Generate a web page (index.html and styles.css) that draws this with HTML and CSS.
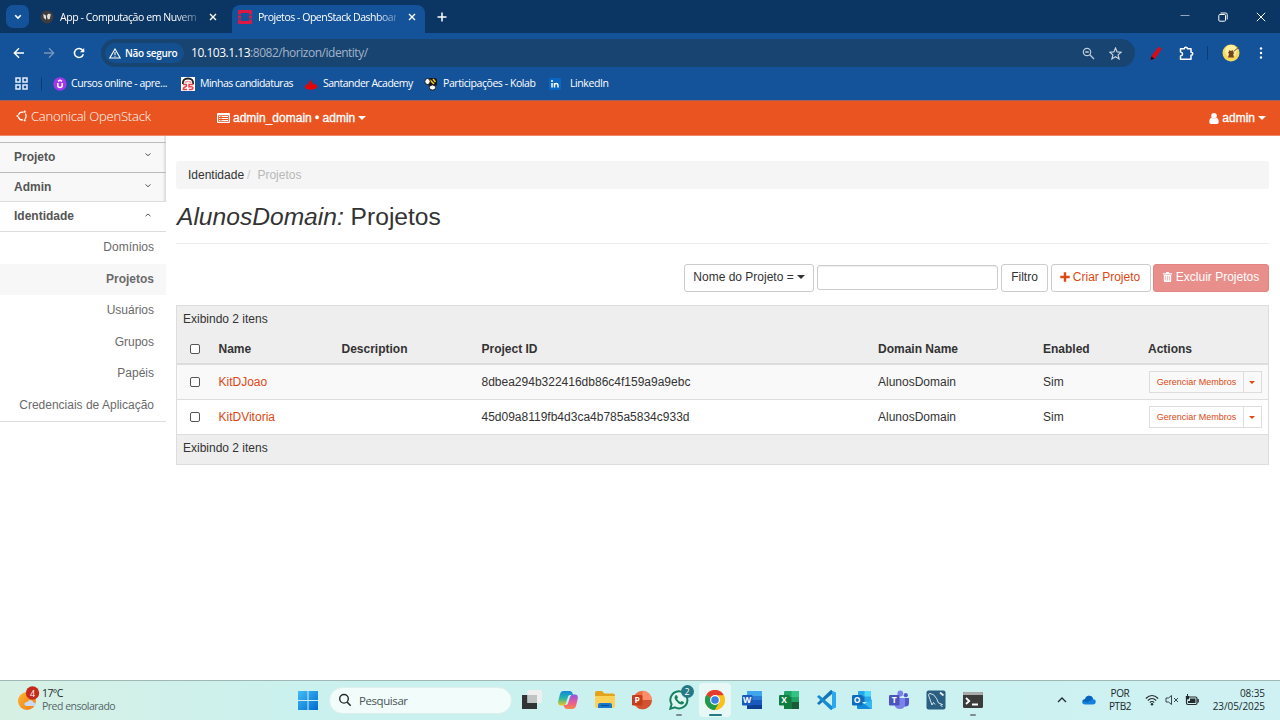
FILE: index.html
```html
<!DOCTYPE html>
<html lang="pt-BR">
<head>
<meta charset="utf-8">
<title>Projetos - OpenStack Dashboard</title>
<link rel="stylesheet" href="styles.css">
</head>
<body>
<div class="screen">
<header class="browser">
  <div class="tabstrip">
    <div class="tabsearch"><svg width="8" height="6" viewBox="0 0 8 6"><path d="M1.2 1.2 4 4l2.8-2.8" fill="none" stroke="#fff" stroke-width="1.6"/></svg></div>
    <div class="tab">
      <svg class="fav" width="14" height="14" viewBox="0 0 14 14"><circle cx="7" cy="7" r="6.5" fill="#3d3d3f"/><path d="M3.2 4 6 5.500v4.200L3.800 8zM10.800 4 8 3.700 6.800 6l1 3.500L9.800 9z" fill="#ddd"/></svg>
      <span class="tabtitle t1">App - Computação em Nuvem</span>
      <svg class="x" width="8" height="8" viewBox="0 0 8 8"><path d="m1 1 6 6M7 1 1 7" stroke="#fff" stroke-width="1.4"/></svg>
    </div>
    <div class="tab active">
      <svg class="fav" width="14" height="14" viewBox="0 0 14 14"><path fill="#da1a42" d="M1 0h12q1 0 1 1v3.500h-3V3H3v1.500H0V1q0-1 1-1zM0 5.500h3v3H0zM11 5.500h3v3h-3zM0 9.500h3V11h8V9.500h3V13q0 1-1 1H1q-1 0-1-1z"/></svg>
      <span class="tabtitle t2">Projetos - OpenStack Dashboar</span>
      <svg class="x" width="8" height="8" viewBox="0 0 8 8"><path d="m1 1 6 6M7 1 1 7" stroke="#fff" stroke-width="1.4"/></svg>
    </div>
    <svg class="newtab" width="10" height="10" viewBox="0 0 10 10"><path d="M5 .5v9M.5 5h9" stroke="#fff" stroke-width="1.5"/></svg>
    <div class="wincontrols">
      <svg width="10" height="10" viewBox="0 0 10 10"><path d="M.5 3.500h9" stroke="#8ea6c1"/></svg>
      <svg width="10" height="10" viewBox="0 0 10 10"><rect x=".8" y="2.500" width="6.700" height="6.700" rx="1" fill="none" stroke="#fff"/><path d="M2.500 1h5.200q1.500 0 1.500 1.500v5" fill="none" stroke="#fff"/></svg>
      <svg width="10" height="10" viewBox="0 0 10 10"><path d="m.8.8 8.400 8.400M9.200.8.800 9.200" stroke="#fff"/></svg>
    </div>
  </div>
  <div class="toolbar">
    <svg width="12" height="12" viewBox="0 0 12 12"><path d="M11 6H1.500M6 1.200 1.300 6 6 10.800" fill="none" stroke="#fff" stroke-width="1.400"/></svg>
    <svg width="12" height="12" viewBox="0 0 12 12"><path d="M1 6h9.500M6 1.200 10.700 6 6 10.800" fill="none" stroke="#7595bf" stroke-width="1.300"/></svg>
    <svg width="12" height="12" viewBox="0 0 12 12"><path d="M10.300 7.200A4.500 4.500 0 1 1 9.600 3.300L11 4.600" fill="none" stroke="#fff" stroke-width="1.500"/><path d="M11.200.9v4.300H6.900z" fill="#fff"/></svg>
    <div class="omnibox">
      <div class="insecure"><svg width="12" height="11" viewBox="0 0 12 11"><path d="M6 1 11.200 10H.8z" fill="none" stroke="#fff" stroke-width="1.100"/><path d="M6 4v3M6 7.800v1" stroke="#fff" stroke-width="1.100"/></svg><span>Não seguro</span></div>
      <span class="url">10.103.1.13<span>:8082/horizon/identity/</span></span>
      <svg class="lens" width="13" height="13" viewBox="0 0 13 13"><circle cx="5" cy="5" r="3.700" fill="none" stroke="#bfcbd9" stroke-width="1.200"/><path d="m7.800 7.800 4.200 4.200M3.200 5h3.600" stroke="#bfcbd9" stroke-width="1.300"/></svg>
      <svg class="star" width="13" height="13" viewBox="0 0 24 24"><path d="m12 2 3 7 7.600.6-5.800 5 1.800 7.400L12 18l-6.600 4 1.800-7.400-5.800-5L9 9z" fill="none" stroke="#c9d4e0" stroke-width="2.200"/></svg>
    </div>
    <svg class="pen" width="12" height="15" viewBox="0 0 12 15"><path d="M8.500 1 11.800 2.500 5 12.800.5 14l1-4z" fill="#e30613"/><path d="m1.300 10.500 3.400 2L.5 14z" fill="#111"/></svg>
    <svg class="puzzle" width="15" height="15" viewBox="0 0 15 15"><path d="M1.500 2.700h3.900q0-1.500 1.500-1.500t1.500 1.500H12v3.500q1.800 0 1.800 1.500T12 9.200v4.100H1.500V10q2.100-.3 2.100-2T1.500 6z" fill="none" stroke="#fff" stroke-width="1.500" stroke-linejoin="round"/></svg>
    <i class="vsep"></i>
    <svg class="avatar" width="18" height="18" viewBox="0 0 18 18"><circle cx="9" cy="9" r="8.500" fill="#f8d95c"/><circle cx="9" cy="7" r="6" fill="#fff0a1"/><path d="m7 6 1 .7h2L11 6v2l1.500 1-1.300 1 .8 3.500H6l1-3.500-1-1.500 1-1z" fill="#75431f"/><path d="M11.500 7.500 16.500 3.500" stroke="#78502a"/></svg>
    <svg class="dots" width="4" height="14" viewBox="0 0 4 14"><g fill="#fff"><circle cx="2" cy="2.500" r="1.200"/><circle cx="2" cy="7" r="1.200"/><circle cx="2" cy="11.500" r="1.200"/></g></svg>
  </div>
  <div class="bookmarks">
    <svg class="apps" width="13" height="13" viewBox="0 0 13 13"><path d="M1 1h4v4H1zM8 1h4v4H8zM1 8h4v4H1zM8 8h4v4H8z" fill="none" stroke="#e4edf8" stroke-width="1.500"/></svg>
    <i class="vsep"></i>
    <div class="bm b1"><svg width="14" height="14" viewBox="0 0 14 14"><circle cx="7" cy="7" r="6.700" fill="#a435f0"/><path d="M4.800 6v2.500q0 2 2.200 2t2.200-2V6M5 4.400 7 3.200l2 1.200" fill="none" stroke="#fff" stroke-width="1.500"/></svg><span>Cursos online - apre...</span></div>
    <div class="bm b2"><svg width="14" height="14" viewBox="0 0 14 14"><path fill="#fff" d="M0 0h14v14H0z"/><path d="M1.800 7q-.3-5.500 5.200-5.500T12.200 7" fill="none" stroke="#222" stroke-width="1.800"/><path d="M3.500 5.500q3.500-2 7 0" fill="none" stroke="#f19b9b" stroke-width="1.500"/><path d="M2 7.500h3.300q.7 2-1.300 2.500-2 .8-1.800 2.500H6M12.500 7.500H8v2.300q4-.5 4 1.200t-4.200 1.500" fill="none" stroke="#e8434a" stroke-width="1.500"/></svg><span>Minhas candidaturas</span></div>
    <div class="bm b3"><svg width="14" height="14" viewBox="0 0 14 14"><path d="M7 2q-.5 2 1.200 3.700T9.500 9l.7-2.500Q13.500 8 13 10q-1 2.600-6 2.700-5.500 0-6-2.700-.2-2 3-3Q5 8.500 6 9.500 4 6.500 5.500 4.500L7 2z" fill="#ec0000"/></svg><span>Santander Academy</span></div>
    <div class="bm b4"><svg width="14" height="14" viewBox="0 0 14 14"><rect x="4" y="1" width="9" height="8" rx="2.500" fill="#171717"/><path d="m6 3 4 4M9 2l2.500 3" stroke="#f6c52c" stroke-width="1.600"/><ellipse cx="3.500" cy="4.500" rx="2.700" ry="3" fill="#fff" stroke="#171717"/><ellipse cx="8.500" cy="10.500" rx="3.200" ry="2.600" fill="#fff" stroke="#171717"/></svg><span>Participações - Kolab</span></div>
    <div class="bm b5"><svg width="12" height="12" viewBox="0 0 12 12"><rect width="12" height="12" rx="1" fill="#0a66c2"/><path d="M3 5v4.500M5.500 9.500V5M5.500 7q.3-1.500 1.800-1.500T9 7.200v2.300" fill="none" stroke="#fff" stroke-width="1.500"/><circle cx="3" cy="3" r="1" fill="#fff"/></svg><span>LinkedIn</span></div>
  </div>
</header>

<div class="topbar">
  <div class="brand"><svg width="12" height="12" viewBox="0 0 12 12"><circle cx="6.200" cy="6" r="3.900" fill="none" stroke="#fff" stroke-width="1.300" stroke-dasharray="6 2.168" stroke-dashoffset="-5.100"/><g fill="#fff"><circle cx="1.500" cy="6" r="1.100"/><circle cx="8.700" cy="1.700" r="1.100"/><circle cx="8.700" cy="10.300" r="1.100"/></g></svg><span>Canonical OpenStack</span></div>
  <div class="context"><svg width="13" height="10" viewBox="0 0 13 10"><path fill="#fff" fill-rule="evenodd" d="M1 0h11q1 0 1 1v8q0 1-1 1H1q-1 0-1-1V1q0-1 1-1zM1.200 2.300v6.500h10.600V2.300z"/><path d="M2 3.500h1.500M4.500 3.500H11M2 5.500h1.500M4.500 5.500H11M2 7.500h1.500M4.500 7.500H11" stroke="#fff" stroke-width="1.100"/></svg><span>admin_domain • admin</span><i class="caret"></i></div>
  <div class="user"><svg width="10" height="11" viewBox="0 0 10 11"><circle cx="5" cy="2.900" r="2.800" fill="#fff"/><path d="M.3 9.300q0-4.300 2.400-4.300Q5 6.500 7.300 5q2.400 0 2.400 4.300Q9.700 11 8 11H2Q.3 11 .3 9.300z" fill="#fff"/></svg><span>admin</span><i class="caret"></i></div>
</div>

<div class="content">
  <nav class="sidebar">
    <div class="spacer"></div>
    <div class="group">Projeto<svg width="6" height="4" viewBox="0 0 6 4"><path d="m.5.500 2.500 2.200L5.500.500" fill="none" stroke="#555"/></svg></div>
    <div class="group second">Admin<svg width="6" height="4" viewBox="0 0 6 4"><path d="m.5.500 2.500 2.200L5.500.500" fill="none" stroke="#555"/></svg></div>
    <div class="group open">Identidade<svg width="6" height="4" viewBox="0 0 6 4"><path d="M.5 3.200 3 1l2.500 2.200" fill="none" stroke="#555"/></svg></div>
    <div class="links"><a>Domínios</a><a class="on">Projetos</a><a>Usuários</a><a>Grupos</a><a>Papéis</a><a>Credenciais de Aplicação</a></div>
  </nav>
  <main>
    <div class="crumbs"><span>Identidade</span><span class="slash">/</span><span class="here">Projetos</span></div>
    <h1><em>AlunosDomain:</em> Projetos</h1>
    <div class="actions">
      <div class="btn field">Nome do Projeto =<i class="caret"></i></div>
      <input class="search" type="text">
      <div class="btn filter">Filtro</div>
      <div class="btn create"><svg width="10" height="10" viewBox="0 0 10 10"><path d="M5 .3v9.400M.3 5h9.400" stroke="#dd4814" stroke-width="2.400"/></svg>Criar Projeto</div>
      <div class="btn delete"><svg width="9" height="10" viewBox="0 0 9 10"><path fill="#fff" fill-rule="evenodd" d="M0 1.300h2.700L3.300 0h2.400l.6 1.300H9v1.200H0zM.8 3h7.400v6q0 1-1 1H1.800q-1 0-1-1zM2.500 4v4.500h.6V4zM4.200 4v4.500h.6V4zM5.900 4v4.500h.6V4z"/></svg>Excluir Projetos</div>
    </div>
    <section class="table">
      <div class="count">Exibindo 2 itens</div>
      <div class="row head"><i class="check"></i><span>Name</span><span>Description</span><span>Project ID</span><span>Domain Name</span><span>Enabled</span><span>Actions</span></div>
      <div class="row odd"><i class="check"></i><a>KitDJoao</a><span></span><span>8dbea294b322416db86c4f159a9a9ebc</span><span>AlunosDomain</span><span>Sim</span><div class="split"><b>Gerenciar Membros</b><u><i class="caret"></i></u></div></div>
      <div class="row"><i class="check"></i><a>KitDVitoria</a><span></span><span>45d09a8119fb4d3ca4b785a5834c933d</span><span>AlunosDomain</span><span>Sim</span><div class="split"><b>Gerenciar Membros</b><u><i class="caret"></i></u></div></div>
      <div class="count foot">Exibindo 2 itens</div>
    </section>
  </main>
</div>

<footer class="taskbar">
  <div class="weather">
    <svg width="24" height="26" viewBox="0 0 24 26"><defs><linearGradient id="sun" x2="1" y2="1"><stop stop-color="#ffb32d"/><stop offset="1" stop-color="#ef7c17"/></linearGradient></defs><circle cx="10" cy="15" r="9" fill="url(#sun)"/><path d="M10 20q-3-.2-2.500-2.600Q8.200 15.500 10.500 16q1.700-3 4.500-1.500 1.200.8 1.300 2 2.700 0 2.400 2-.3 1.500-2.200 1.500z" fill="#c8daf5"/><circle cx="15.500" cy="7" r="6.700" fill="#c42b1c"/><text x="15.500" y="10.500" text-anchor="middle" class="badge">4</text></svg>
    <div><span class="temp">17°C</span><span class="sky">Pred ensolarado</span></div>
  </div>
  <svg class="start" width="20" height="20" viewBox="0 0 20 20"><defs><linearGradient id="win" x2="1" y2="1"><stop stop-color="#42bdf5"/><stop offset="1" stop-color="#006bd0"/></linearGradient></defs><path d="M0 0h9.500v9H0zM10.500 0H20v9h-9.500zM0 10h9.500v9H0zM10.500 10H20v9h-9.500z" fill="url(#win)"/></svg>
  <div class="find"><svg width="14" height="14" viewBox="0 0 14 14"><circle cx="6" cy="5.800" r="4.300" fill="none" stroke="#252b2d" stroke-width="1.400"/><path d="m9 9 3.700 3.800" stroke="#252b2d" stroke-width="1.600"/></svg><span>Pesquisar</span></div>
  <div class="dock">
    <div class="app"><svg viewBox="0 0 20 20"><path d="M0 5h15v14H0z" fill="#303435"/><path d="M5.500 0H20v13H5.500z" fill="#efefef"/><path d="M5.500 5H15v8H5.500z" fill="#bfc5c5"/></svg></div>
    <div class="app"><svg viewBox="0 0 20 20"><defs><linearGradient id="cp1" x2="0" y2="1"><stop stop-color="#1485dd"/><stop offset=".5" stop-color="#23b7a5"/><stop offset="1" stop-color="#f2c51c"/></linearGradient><linearGradient id="cp2" x2="0" y2="1"><stop stop-color="#8b58e8"/><stop offset=".6" stop-color="#ef5b8f"/><stop offset="1" stop-color="#f58a44"/></linearGradient></defs><path d="M5 1h7q2 0 2.600 2.500L15 5h-3q-1.500 0-2 1.800L8 13q-.8 2.500-3 2.500H3Q-.5 15.500.3 11L2 4q.8-3 3-3z" fill="url(#cp1)"/><path d="M15 19H9q-2 0-2.800-2L5.500 15H8q1.500 0 2-1.800L12 7q.8-2.500 3-2.500h2q3.500 0 2.700 4.500L18 16q-.8 3-3 3z" fill="url(#cp2)"/></svg></div>
    <div class="app"><svg viewBox="0 0 20 20"><path d="M0 3q0-2 2-2h5l2.500 2.500H18q2 0 2 2V8H0z" fill="#e5a31c"/><path d="M0 6h20v10q0 2-2 2H2q-2 0-2-2z" fill="#fcd258"/><path d="M3 18v-3q0-2 2-2h10q2 0 2 2v3z" fill="#1879ce"/><path d="M6 15.500h8" stroke="#0a4d93" stroke-width="1.200"/></svg></div>
    <div class="app"><svg viewBox="0 0 20 20"><circle cx="10.500" cy="10" r="9.300" fill="#ed6c47"/><path d="M10.500.7a9.300 9.300 0 0 1 9.300 9.300h-9.300z" fill="#ff8f6b"/><path d="M10 10h9.800a9.300 9.300 0 0 1-15 7.300z" fill="#d35230"/><rect y="5" width="10.500" height="10.500" rx="1.200" fill="#c43e1c"/><text x="5.200" y="13.200" text-anchor="middle" class="office">P</text></svg></div>
    <div class="app wa"><svg viewBox="0 0 20 20"><path d="m1.300 18.700 1.300-4.500a8.500 8.500 0 1 1 3.400 3.200z" fill="#dff5ef" stroke="#14805e" stroke-width="2"/><path d="M6.300 5.500q1-1 1.700 0l1 2-.9 1.300q1 2.300 3.200 3.200l1.400-1 2 1q.8.700-.2 1.800-1.700 1.700-5.200-.6-3.500-2.800-3.800-5.200 0-1.500.8-2.500z" fill="#14805e"/></svg><span class="unread">2</span><i class="run"></i></div>
    <div class="app current"><svg viewBox="0 0 20 20"><circle cx="10" cy="10" r="10" fill="#fbc116"/><path d="M10 10 1.300 5A10 10 0 0 1 18.700 5z" fill="#e33b2e"/><path d="M1.300 5A10 10 0 0 0 10 20l4.300-7.500L10 10z" fill="#229a4b"/><path d="M10 5.200h8.700A10 10 0 0 1 10 20l4.300-7.500z" fill="#fbc116"/><circle cx="10" cy="10" r="4.900" fill="#fff"/><circle cx="10" cy="10" r="3.800" fill="#397fe8"/></svg><i class="run wide"></i></div>
    <div class="app"><svg viewBox="0 0 20 20"><rect x="5" y="1" width="15" height="18" rx="1.200" fill="#2b7cd3"/><path d="M5 1h15v5H5z" fill="#41a5ee"/><path d="M5 10h15v5H5z" fill="#185abd"/><path d="M5 15h15v4H5z" fill="#103f91"/><rect y="5" width="10.500" height="10.500" rx="1.200" fill="#185abd"/><text x="5.200" y="13.200" text-anchor="middle" class="office">W</text></svg></div>
    <div class="app"><svg viewBox="0 0 20 20"><rect x="5" y="1" width="15" height="18" rx="1.200" fill="#21a366"/><path d="M12.500 1H20v6h-7.500z" fill="#33c481"/><path d="M5 7h7.500v12H5z" fill="#107c41"/><path d="M12.500 12H20v7h-7.500z" fill="#185c37"/><rect y="5" width="10.500" height="10.500" rx="1.200" fill="#107c41"/><text x="5.200" y="13.200" text-anchor="middle" class="office">X</text></svg></div>
    <div class="app"><svg viewBox="0 0 20 20"><path d="m1 13.200 2 1.800L16 4V0L14.500.2z" fill="#1476b6"/><path d="m1 6.800 2-1.800L16 16v4l-1.500-.2z" fill="#168bd2"/><path d="m14.500 0 5.500 2.500v15L14.500 20q1.500-.5 1.500-2V2q0-1.500-1.500-2z" fill="#29a8f2"/></svg></div>
    <div class="app"><svg viewBox="0 0 20 20"><rect x="6" y="1" width="13" height="11" rx="1" fill="#28a8ea"/><path d="M12.500 1H19v5.500h-6.500z" fill="#50d9ff"/><path d="M6 6.500h6.500V12H6z" fill="#0f6cbd"/><path d="M5 9.500 12.500 14 20 9.500V18q0 1-1 1H6q-1 0-1-1z" fill="#148bd9"/><path d="m12.500 14 7.500-4.500V18q0 1-1 1z" fill="#35b8f1"/><rect y="5" width="10.500" height="10.500" rx="1.200" fill="#0f6cbd"/><text x="5.200" y="13.200" text-anchor="middle" class="office">O</text></svg></div>
    <div class="app"><svg viewBox="0 0 20 20"><circle cx="16.800" cy="5.200" r="2.100" fill="#5059c9"/><circle cx="11.300" cy="3.500" r="2.900" fill="#7b83eb"/><path d="M14 8h6v5q0 3.500-3.500 3.500H14z" fill="#5059c9"/><path d="M5.500 8H16v6q0 5-5.200 5T5.500 14z" fill="#7b83eb"/><rect y="5" width="10.500" height="10.500" rx="1.200" fill="#4b53bc"/><text x="5.200" y="13.200" text-anchor="middle" class="office">T</text></svg></div>
    <div class="app"><svg viewBox="0 0 20 20"><rect x=".5" y=".5" width="19" height="19" rx="2" fill="#2b5f82"/><path d="M6 15 3.500 8Q1.500 3.500 4 3.500q4 0 6.500 5l2 4.500 4 1.500-2 .5 2 2M6 15l1.500-2.500 1.500 2" fill="none" stroke="#d6e5ee"/><path d="m14 2.500 3.500 3" stroke="#eee" stroke-width="1.700"/></svg></div>
    <div class="app"><svg viewBox="0 0 20 20"><rect y="2" width="20" height="16" rx="1.500" fill="#3b3b3b"/><path d="M0 5V3.500Q0 2 1.500 2h17Q20 2 20 3.500V5z" fill="#aaa"/><path d="m3 8 3.200 3L3 14M9 14.500h6" fill="none" stroke="#fff" stroke-width="1.800"/></svg><i class="run"></i></div>
  </div>
  <div class="tray">
    <svg class="up" width="10" height="6" viewBox="0 0 10 6"><path d="m1 5 4-4 4 4" fill="none" stroke="#252b2d" stroke-width="1.300"/></svg>
    <svg class="cloud" width="14" height="10" viewBox="0 0 14 10"><path d="M3 9.500Q0 9.300.2 6.800.5 4.500 3 4.300 4 1 7 .8q3.300 0 4 3.200 3 .5 2.800 3-.3 2.500-3 2.500z" fill="#1482dc"/><path d="M.3 6q.5-1.700 2.700-1.700Q4 1 7 .8q3 0 4 3.200L5 7.500z" fill="#0a63bd"/></svg>
    <div class="lang"><span>POR</span><span>PTB2</span></div>
    <svg class="wifi" width="14" height="12" viewBox="0 0 14 12"><path d="M.8 4.500q6.200-6 12.400 0M2.800 6.500q4.200-4 8.400 0M4.800 8.500q2.200-2 4.400 0" fill="none" stroke="#252b2d" stroke-width="1.100"/><circle cx="7" cy="10.300" r="1.200" fill="#252b2d"/></svg>
    <svg class="vol" width="14" height="12" viewBox="0 0 14 12"><path d="M1 4h2.500L6.500 1.500v9L3.500 8H1zM9 4l4 4M13 4 9 8" fill="none" stroke="#38474a"/></svg>
    <svg class="bat" width="14" height="12" viewBox="0 0 14 12"><rect x="1.500" y="3" width="10.500" height="7.500" rx="1.500" fill="none" stroke="#252b2d" stroke-width="1.200"/><path d="M5 4.500h5.500V9H3V7h2zM12.500 5h1.300v3.500h-1.300zM2 0v2H.8v2q0 1.500 1.700 1.500T4.200 4V2H3V0z" fill="#252b2d"/></svg>
    <div class="clock"><span>08:35</span><span>23/05/2025</span></div>
  </div>
</footer>
</div>
</body>
</html>
```
FILE: styles.css
```css
* { box-sizing: border-box; }
body { margin: 0; background: #fff; color: #333; font: 12px/16px "Liberation Sans", Arial, sans-serif; }
svg { display: block; flex: none; }
.screen { width: 1280px; height: 720px; display: flex; flex-direction: column; overflow: hidden; }

/* Browser window */
.browser { height: 100px; background: #145399; color: #fff; font: 10.5px/16px "Open Sans", "Noto Sans", sans-serif; white-space: nowrap; }
.tabstrip { height: 33px; background: #0b3562; display: flex; align-items: flex-start; }
.tabsearch { width: 23px; height: 23px; margin: 5px 0 0 6px; border-radius: 7px; background: #145399; display: flex; align-items: center; justify-content: center; }
.tab { height: 28px; margin-top: 5px; display: flex; align-items: center; width: 193px; padding: 0 0 4px 6px; border-radius: 8px 8px 0 0; }
.tab:not(.active) { margin-left: 5px; width: 198px; }
.tab.active { background: #145399; }
.tabtitle { -webkit-mask-image: linear-gradient(90deg, #000 85%, rgba(0,0,0,.3)); mask-image: linear-gradient(90deg, #000 85%, rgba(0,0,0,.3)); }
.t1 { width: 136px; margin-left: 6px; letter-spacing: -.42px; }
.t2 { width: 138px; margin-left: 6px; letter-spacing: -.47px; }
.x { margin-left: 13px; }
.t2 + .x { margin-left: 12px; }
.newtab { margin: 12px 0 0 12px; }
.wincontrols { display: flex; gap: 28px; margin: 12px 0 0 733px; }
.toolbar { height: 40px; display: flex; align-items: center; padding-left: 13px; }
.toolbar > svg:nth-child(-n+3) { margin-right: 18px; }
.omnibox { width: 1034px; height: 28px; margin-left: -2px; border-radius: 14px; background: #184472; display: flex; align-items: center; padding-left: 4px; }
.insecure { width: 79px; height: 20px; border-radius: 10px; background: #14508f; display: flex; align-items: center; gap: 4px; padding-left: 4px; font-weight: 600; font-size: 10px; letter-spacing: -.3px; }
.url { margin-left: 7px; font-size: 12px; letter-spacing: -.48px; width: 891px; }
.url span { color: #a3b4c8; }
.star { margin-left: 14px; }
.pen { margin-left: 15px; }
.puzzle { margin-left: 17px; }
.vsep { width: 1px; height: 14px; background: #0d3c70; }
.toolbar .vsep { margin-left: 13px; }
.avatar { margin-left: 14px; }
.dots { margin-left: 19px; }
.bookmarks { display: flex; align-items: center; height: 21px; padding-left: 15px; }
.bookmarks .vsep { margin: 0 12px 0 13px; }
.bm { display: flex; align-items: center; gap: 4px; letter-spacing: -.5px; }
.bm svg { margin-left: -1px; }
.bm span { padding-bottom: 1px; }
.b1 { width: 128px; letter-spacing: -.45px; }
.b2 { width: 123px; gap: 5px; }
.b3 { width: 120px; gap: 5px; }
.b4 { width: 125px; gap: 5px; letter-spacing: -.43px; }
.b5 { gap: 9px; letter-spacing: -.4px; }

/* Dashboard header */
.topbar { height: 36px; background: #e95420; border-top: 1px solid #a06060; border-bottom: 1px solid #ee8a69; color: #fff; display: flex; align-items: center; }
.brand { display: flex; align-items: center; gap: 3px; width: 201px; padding: 0 0 4px 16px; font: 300 13px/18px "Open Sans", sans-serif; letter-spacing: -.2px; }
.context { display: flex; align-items: center; gap: 3px; padding-left: 16px; -webkit-text-stroke: .3px #fff; }
.user { display: flex; align-items: center; gap: 3px; margin: 0 14px 0 auto; -webkit-text-stroke: .3px #fff; }
.caret { display: inline-block; border: 4px solid transparent; border-top-color: currentColor; border-bottom: 0; margin-left: 0; }
.user .caret { margin-left: 0; }

/* Dashboard body */
.content { height: 544px; display: flex; }
.sidebar { width: 166px; color: #555; }
.spacer { height: 6px; background: #f8f8f8; border-right: 2px solid #e3e3e3; }
.group { height: 30px; border-top: 1px solid #bbb; background: #f8f8f8; font-weight: bold; padding: 0 15px 2px 14px; display: flex; align-items: center; justify-content: space-between; box-shadow: inset -3px 0 2px -1px #ddd; }
.group svg { margin-top: -3px; }
.second { height: 29px; padding-bottom: 0; }
.open { height: 31px; background: #fff; box-shadow: none; border-color: #ddd; border-bottom: 1px solid #ddd; }
.open svg { margin-top: -1px; }
.links { border-bottom: 1px solid #ddd; color: #6a6a6a; }
.links a { display: block; height: 31.5px; line-height: 31.5px; text-align: right; padding-right: 12px; }
.links .on { background: #f7f7f7; font-weight: bold; }
main { width: 1093px; margin-left: 10px; padding-top: 25px; }
.crumbs { height: 28px; border-radius: 3px; background: #f5f5f5; padding-left: 12px; display: flex; align-items: center; }
.slash { color: #ccc; margin: 0 7px 0 3px; }
.here { color: #b8b8b8; }
h1 { margin: 0; height: 55px; padding: 13px 0 0 1px; border-bottom: 1px solid #eee; font-size: 24.6px; line-height: 30px; font-weight: normal; color: #333; }
.actions { display: flex; justify-content: flex-end; margin-top: 20px; height: 41px; }
.btn { height: 28px; border: 1px solid #ccc; border-radius: 3px; display: flex; align-items: center; justify-content: center; padding-bottom: 2px; white-space: nowrap; }
.field { width: 130px; gap: 3px; }
.search { width: 181px; height: 25px; margin: 1px 3px 0; border: 1px solid #ccc; border-radius: 3px; box-shadow: inset 0 1px 1px #eee; }
.filter { width: 47px; }
.create { width: 100px; margin-left: 3px; gap: 3px; padding-right: 2px; color: #dd4814; }
.delete { width: 116px; margin-left: 2px; gap: 4px; color: #fff; background: #e88f8c; border-color: #e48380; }
.table { border: 1px solid #ddd; height: 160px; }
.count { height: 29px; background: #eee; padding: 5px 6px; }
.foot { height: 30px; border-top: 1px solid #ddd; }
.row { height: 35px; border-top: 1px solid #ddd; display: grid; align-items: center; grid-template-columns: 42px 123px 140px 396.5px 165px 105px 115px; }
.head { height: 28px; background: #eee; border: 0; font-weight: bold; }
.odd { background: #f9f9f9; border-top: 2px solid #ddd; height: 36px; }
.row > a, .row > span { padding-bottom: 1px; margin-left: -.5px; }
.head > span { padding-bottom: 0; }
.row a, .row .caret { color: #dd4814; }
.check { width: 10px; height: 10px; border: 1px solid #555; border-radius: 2px; background: #fff; margin-left: 13px; }
.split { display: flex; width: 113px; height: 22px; border: 1px solid #ddd; color: #dd4814; font-size: 9px; }
.split b { font-weight: normal; width: 94px; border-right: 1px solid #ddd; text-align: center; line-height: 20px; padding-left: 1px; }
.split u { flex: 1; display: flex; align-items: center; justify-content: center; text-decoration: none; }
.split .caret { border-width: 3px 3px 0; margin: 0; }

/* Desktop taskbar */
.taskbar { height: 40px; border-top: 1px solid #9fb8b6; background: linear-gradient(90deg, #d7f0e4, #cbf1ee 22%, #c9f1ef 60%, #d0f1f3); display: flex; align-items: center; font: 10.5px/13px "Open Sans", "Noto Sans", sans-serif; color: #20292b; }
.weather { width: 298px; padding-left: 17px; display: flex; align-items: center; gap: 1px; }
.weather svg { margin-top: -3px; }
.weather div, .lang, .clock { margin-top: -2px; }
.weather span, .tray span { display: block; }
.temp { letter-spacing: -.6px; }
.sky { color: #536668; letter-spacing: -.5px; }
.badge { font-size: 9px; fill: #fff; }
.office { font-size: 8.5px; font-weight: bold; fill: #fff; }
.find { width: 183px; height: 27px; margin: -1px 0 0 11px; border-radius: 14px; background: #f2fcfb; border: 1px solid #dcefed; display: flex; align-items: center; gap: 7px; padding-left: 8px; color: #485557; font-size: 11.5px; letter-spacing: -.42px; }
.dock { display: flex; margin: -1px 0 0 3.5px; gap: 4.75px; }
.app { width: 32px; height: 34px; border-radius: 4px; display: flex; align-items: center; justify-content: center; position: relative; }
.app > svg { width: 20px; height: 20px; }
.current { background: #e7f8f6; }
.run { position: absolute; bottom: 1px; width: 6px; height: 2px; border-radius: 1px; background: #7c8b8c; }
.wide { width: 13px; background: #257985; }
.unread { position: absolute; top: 2px; right: 1px; width: 13px; height: 13px; border-radius: 50%; background: #257985; color: #fff; font-size: 9px; line-height: 13px; text-align: center; }
.tray { margin-left: auto; width: 223px; display: flex; align-items: center; }
.tray > svg { margin-top: -2px; }
.cloud { margin-left: 15px; }
.lang { width: 30px; margin-left: 9px; text-align: center; letter-spacing: -.4px; font-size: 10px; }
.wifi { margin-left: 10px; }
.vol { margin-left: 6px; }
.bat { margin-left: 6px; }
.clock { margin-left: auto; padding-right: 15px; text-align: right; font-size: 10px; letter-spacing: -.08px; }
```
